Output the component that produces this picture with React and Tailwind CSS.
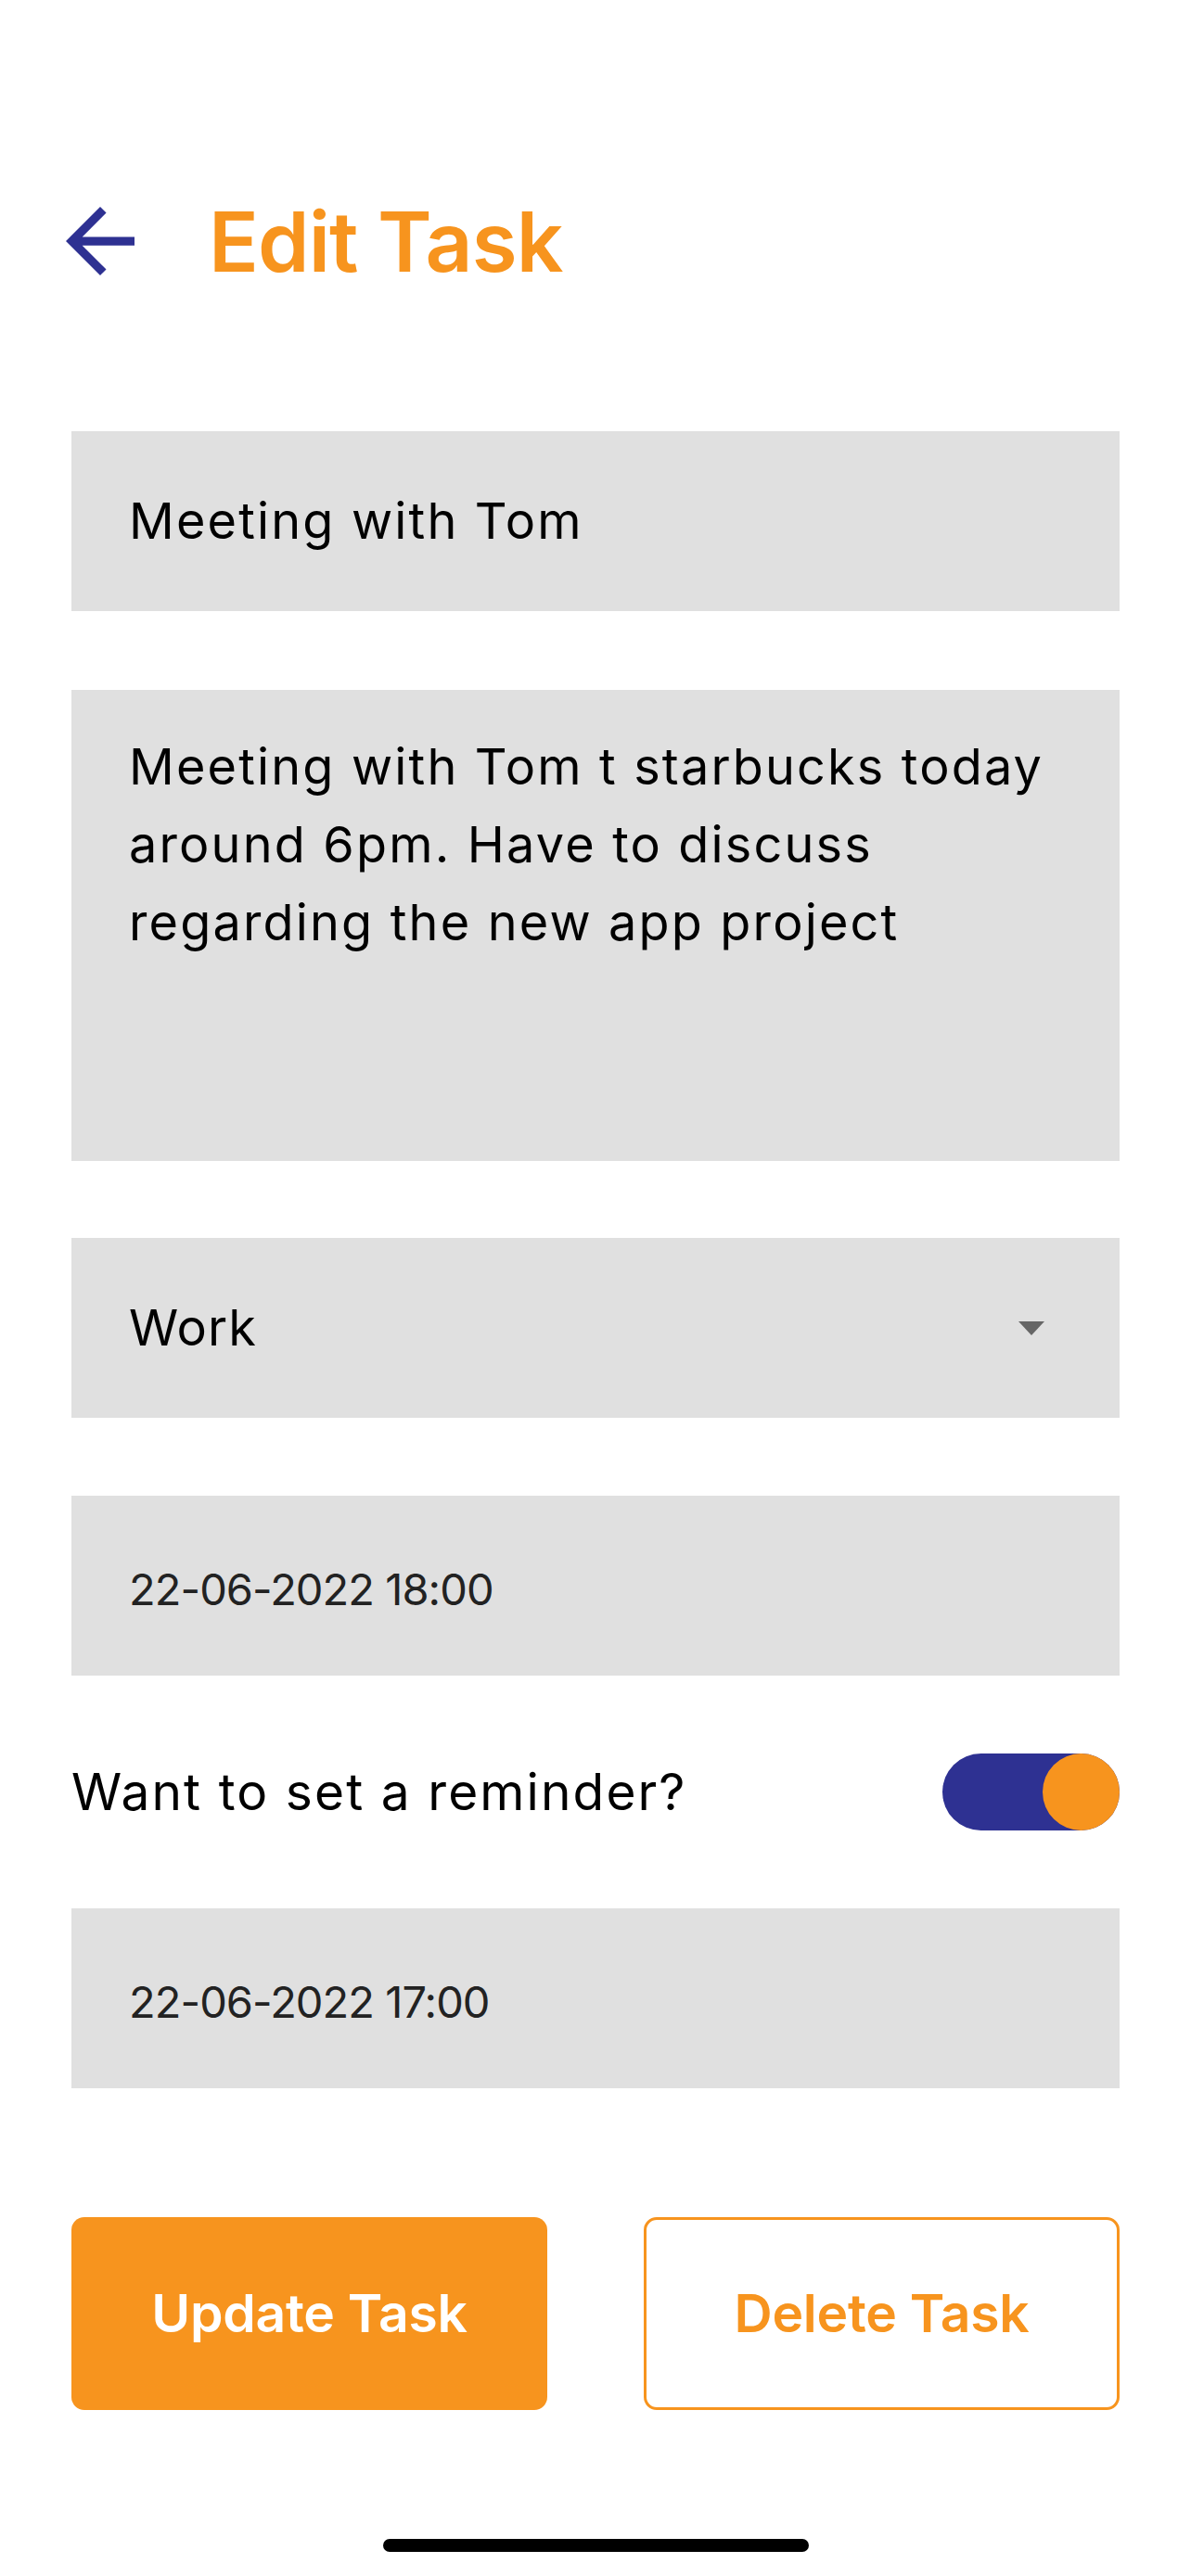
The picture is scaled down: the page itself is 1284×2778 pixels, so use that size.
import React from "react";

function Field({ children, className = "" }) {
  return (
    <div className={"bg-[#e0e0e0] w-full " + className}>{children}</div>
  );
}

export default function App() {
  return (
    <div className="w-[1284px] min-h-[2778px] bg-white font-['Inter','Liberation_Sans',sans-serif] text-black">
      <div className="px-[77px] pt-[223px] flex flex-col">
        <div className="flex items-center h-[74px]">
          <svg width="74" height="74" viewBox="4 4 16 16" className="ml-[-6px] shrink-0">
            <path
              d="M20 11H7.83l5.59-5.59L12 4l-8 8 8 8 1.41-1.41L7.83 13H20v-2z"
              fill="#2e3192"
            />
          </svg>
          <h1 className="ml-[80px] text-[89px] leading-none font-semibold text-[#f7941e] tracking-[-0.01em]">
            Edit Task
          </h1>
        </div>

        <Field className="mt-[168px] h-[194px] flex items-center pl-[62px]">
          <span className="text-[54px] leading-none tracking-[0.04em]">Meeting with Tom</span>
        </Field>

        <Field className="mt-[85px] h-[508px] pl-[62px] pt-[41px]">
          <div className="text-[54px] leading-[84px] tracking-[0.04em]">
            <div>Meeting with Tom t starbucks today</div>
            <div>around 6pm. Have to discuss</div>
            <div>regarding the new app project</div>
          </div>
        </Field>

        <Field className="mt-[83px] h-[194px] flex items-center justify-between pl-[62px] pr-[81px]">
          <span className="text-[54px] leading-none tracking-[0.02em]">Work</span>
          <svg width="28" height="15" viewBox="0 0 28 15">
            <path d="M0 0h28L14 15z" fill="#666666" />
          </svg>
        </Field>

        <Field className="mt-[84px] h-[194px] flex items-center pl-[62px] pt-[6px]">
          <span className="text-[47px] leading-none text-[#222222] tracking-[-0.02em]">22-06-2022 18:00</span>
        </Field>

        <div className="mt-[84px] h-[83px] flex items-center justify-between">
          <span className="text-[55px] leading-none tracking-[0.038em]">Want to set a reminder?</span>
          <div className="w-[191px] h-[83px] rounded-full bg-[#2e3192] flex justify-end">
            <div className="w-[83px] h-[83px] rounded-full bg-[#f7941e]" />
          </div>
        </div>

        <Field className="mt-[84px] h-[194px] flex items-center pl-[62px] pt-[6px]">
          <span className="text-[47px] leading-none text-[#222222] tracking-[-0.02em]">22-06-2022 17:00</span>
        </Field>

        <div className="mt-[139px] h-[208px] flex justify-between">
          <button className="w-[513px] h-[208px] rounded-[14px] bg-[#f7941e] text-white text-[57px] font-semibold flex items-center justify-center tracking-[-0.005em]">
            Update Task
          </button>
          <button className="w-[513px] h-[208px] rounded-[14px] border-[3px] border-[#f7941e] bg-white text-[#f7941e] text-[57px] font-semibold flex items-center justify-center tracking-[-0.005em]">
            Delete Task
          </button>
        </div>

        <div className="mt-[139px] flex justify-center">
          <div className="w-[459px] h-[14px] rounded-full bg-black" />
        </div>
      </div>
    </div>
  );
}
